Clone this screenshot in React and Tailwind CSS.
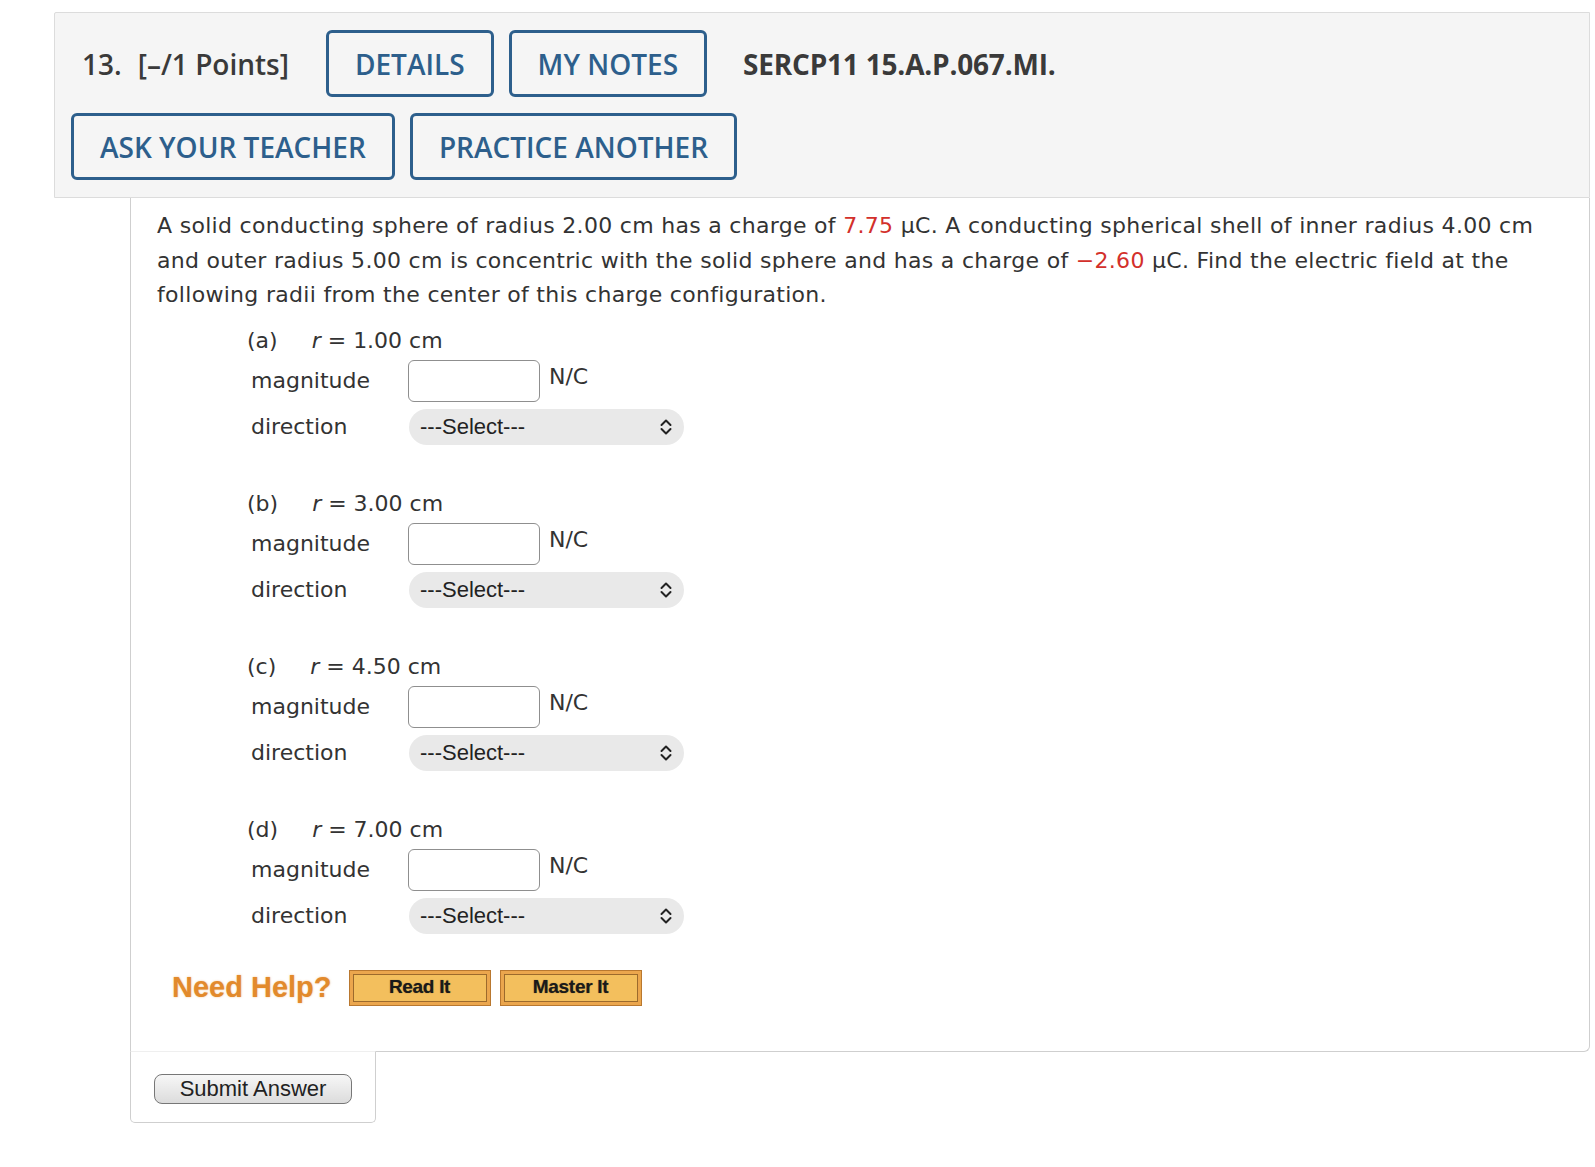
import React from "react";

const parts = [
  { key: "(a)", r: "1.00" },
  { key: "(b)", r: "3.00" },
  { key: "(c)", r: "4.50" },
  { key: "(d)", r: "7.00" },
];

function OutlineButton({ children, className }) {
  return (
    <button
      className={`h-[67px] rounded-[6px] border-[3px] border-[#2d5f8c] bg-transparent px-[26px] text-[28px] font-semibold text-[#2d5f8c] ${className}`}
    >
      {children}
    </button>
  );
}

function Chevron() {
  return (
    <svg width="12" height="18" viewBox="0 0 12 18" fill="none">
      <path
        d="M1.5 7 L6 2.5 L10.5 7 M1.5 11 L6 15.5 L10.5 11"
        stroke="#222"
        strokeWidth="2"
        strokeLinecap="round"
        strokeLinejoin="round"
      />
    </svg>
  );
}

function HelpButton({ children }) {
  return (
    <button className="flex h-[36px] w-[142px] items-center justify-center border border-[#b9782f] bg-[#eba64d] p-[3px]">
      <span className="flex h-full w-full items-center justify-center border border-[#9c6a2c] bg-[#f3bf5d] text-[19px] font-bold tracking-[-0.3px] text-[#1a1a1a] [font-family:'Liberation_Sans',Arial,sans-serif] [text-shadow:0_0_1px_rgba(0,0,0,0.5)]">
        {children}
      </span>
    </button>
  );
}

function Part({ p, last }) {
  return (
    <div className={last ? "" : "mb-[36px]"}>
      {/* part label */}
      <div className="flex h-[35px] items-center">
        <span>{p.key}</span>
        <span className="ml-[34px]">
          <i>r</i> = {p.r} cm
        </span>
      </div>
      {/* magnitude */}
      <div className="flex h-[46px] items-center">
        <span className="w-[161px] pl-[4px]">magnitude</span>
        <div className="h-[42px] w-[132px] rounded-[6px] border border-[#8f8f8f] bg-white" />
        <span className="ml-[9px] -mt-[8px]">N/C</span>
      </div>
      {/* direction */}
      <div className="flex h-[46px] items-center">
        <span className="w-[162px] pl-[4px]">direction</span>
        <div className="flex h-[36px] w-[275px] items-center justify-between rounded-full bg-[#e9e9e9] pl-[11px] pr-[12px] text-[22px] text-[#222] [font-family:'Liberation_Sans',Arial,sans-serif]">
          <span>---Select---</span>
          <Chevron />
        </div>
      </div>
    </div>
  );
}

export default function App() {
  return (
    <div className="min-h-screen bg-white pt-[12px] pl-[54px] pr-[5px] pb-[40px]">
      {/* question header */}
      <div className="h-[186px] rounded-tl-[2px] border border-[#dcdcdc] bg-[#f5f5f5] pl-[16px] pt-[17px] text-[#333] [font-family:'Open_Sans',sans-serif]">
        <div className="flex items-center">
          <span className="ml-[11px] text-[28px] font-semibold text-[#3a3a3a]">
            13.<span className="ml-[16px]">[–/1 Points]</span>
          </span>
          <OutlineButton className="ml-[37px]">DETAILS</OutlineButton>
          <OutlineButton className="ml-[15px]">MY NOTES</OutlineButton>
          <span className="ml-[36px] text-[28px] font-bold tracking-[-0.2px] text-[#3a3a3a]">
            SERCP11 15.A.P.067.MI.
          </span>
        </div>
        <div className="mt-[16px] flex items-center">
          <OutlineButton>ASK YOUR TEACHER</OutlineButton>
          <OutlineButton className="ml-[15px]">PRACTICE ANOTHER</OutlineButton>
        </div>
      </div>

      {/* question body */}
      <div className="ml-[76px]">
        <div className="rounded-br-[6px] border-x border-b border-[#cfcfcf] pb-[45px] pl-[26px] pr-[10px] pt-[11px] text-[22px] leading-[34.5px] text-[#333] [font-family:'DejaVu_Sans',Verdana,sans-serif]">
          <p className="whitespace-nowrap tracking-[0.3px]">
            A solid conducting sphere of radius 2.00 cm has a charge of{" "}
            <span className="text-[#d3302b]">7.75</span> μC. A conducting spherical shell of inner radius 4.00 cm
            <br />
            and outer radius 5.00 cm is concentric with the solid sphere and has a charge of{" "}
            <span className="text-[#d3302b]">−2.60</span> μC. Find the electric field at the
            <br />
            following radii from the center of this charge configuration.
          </p>

          <div className="ml-[90px] mt-[10px] leading-normal">
            {parts.map((p, i) => (
              <Part key={p.key} p={p} last={i === parts.length - 1} />
            ))}
          </div>

          {/* help row */}
          <div className="ml-[15px] mt-[31px] flex h-[36px] items-center">
            <span className="text-[29px] font-bold text-[#e28a2c] [font-family:'Liberation_Sans',Arial,sans-serif] [text-shadow:0_0_2px_rgba(226,138,44,0.55)]">
              Need Help?
            </span>
            <div className="ml-[17px]">
              <HelpButton>Read It</HelpButton>
            </div>
            <div className="ml-[9px]">
              <HelpButton>Master It</HelpButton>
            </div>
          </div>
        </div>

        {/* submit tab */}
        <div className="relative -mt-px h-[72px] w-[246px] rounded-b-[5px] border-x border-b border-t border-[#cfcfcf] border-t-[#efefef] bg-white pl-[23px] pt-[22px]">
          <button className="h-[30px] w-[198px] rounded-[8px] border border-[#777] bg-gradient-to-b from-[#f7f7f7] to-[#dcdcdc] text-[22px] leading-none text-[#222] [font-family:'Liberation_Sans',Arial,sans-serif]">
            Submit Answer
          </button>
        </div>
      </div>
    </div>
  );
}
